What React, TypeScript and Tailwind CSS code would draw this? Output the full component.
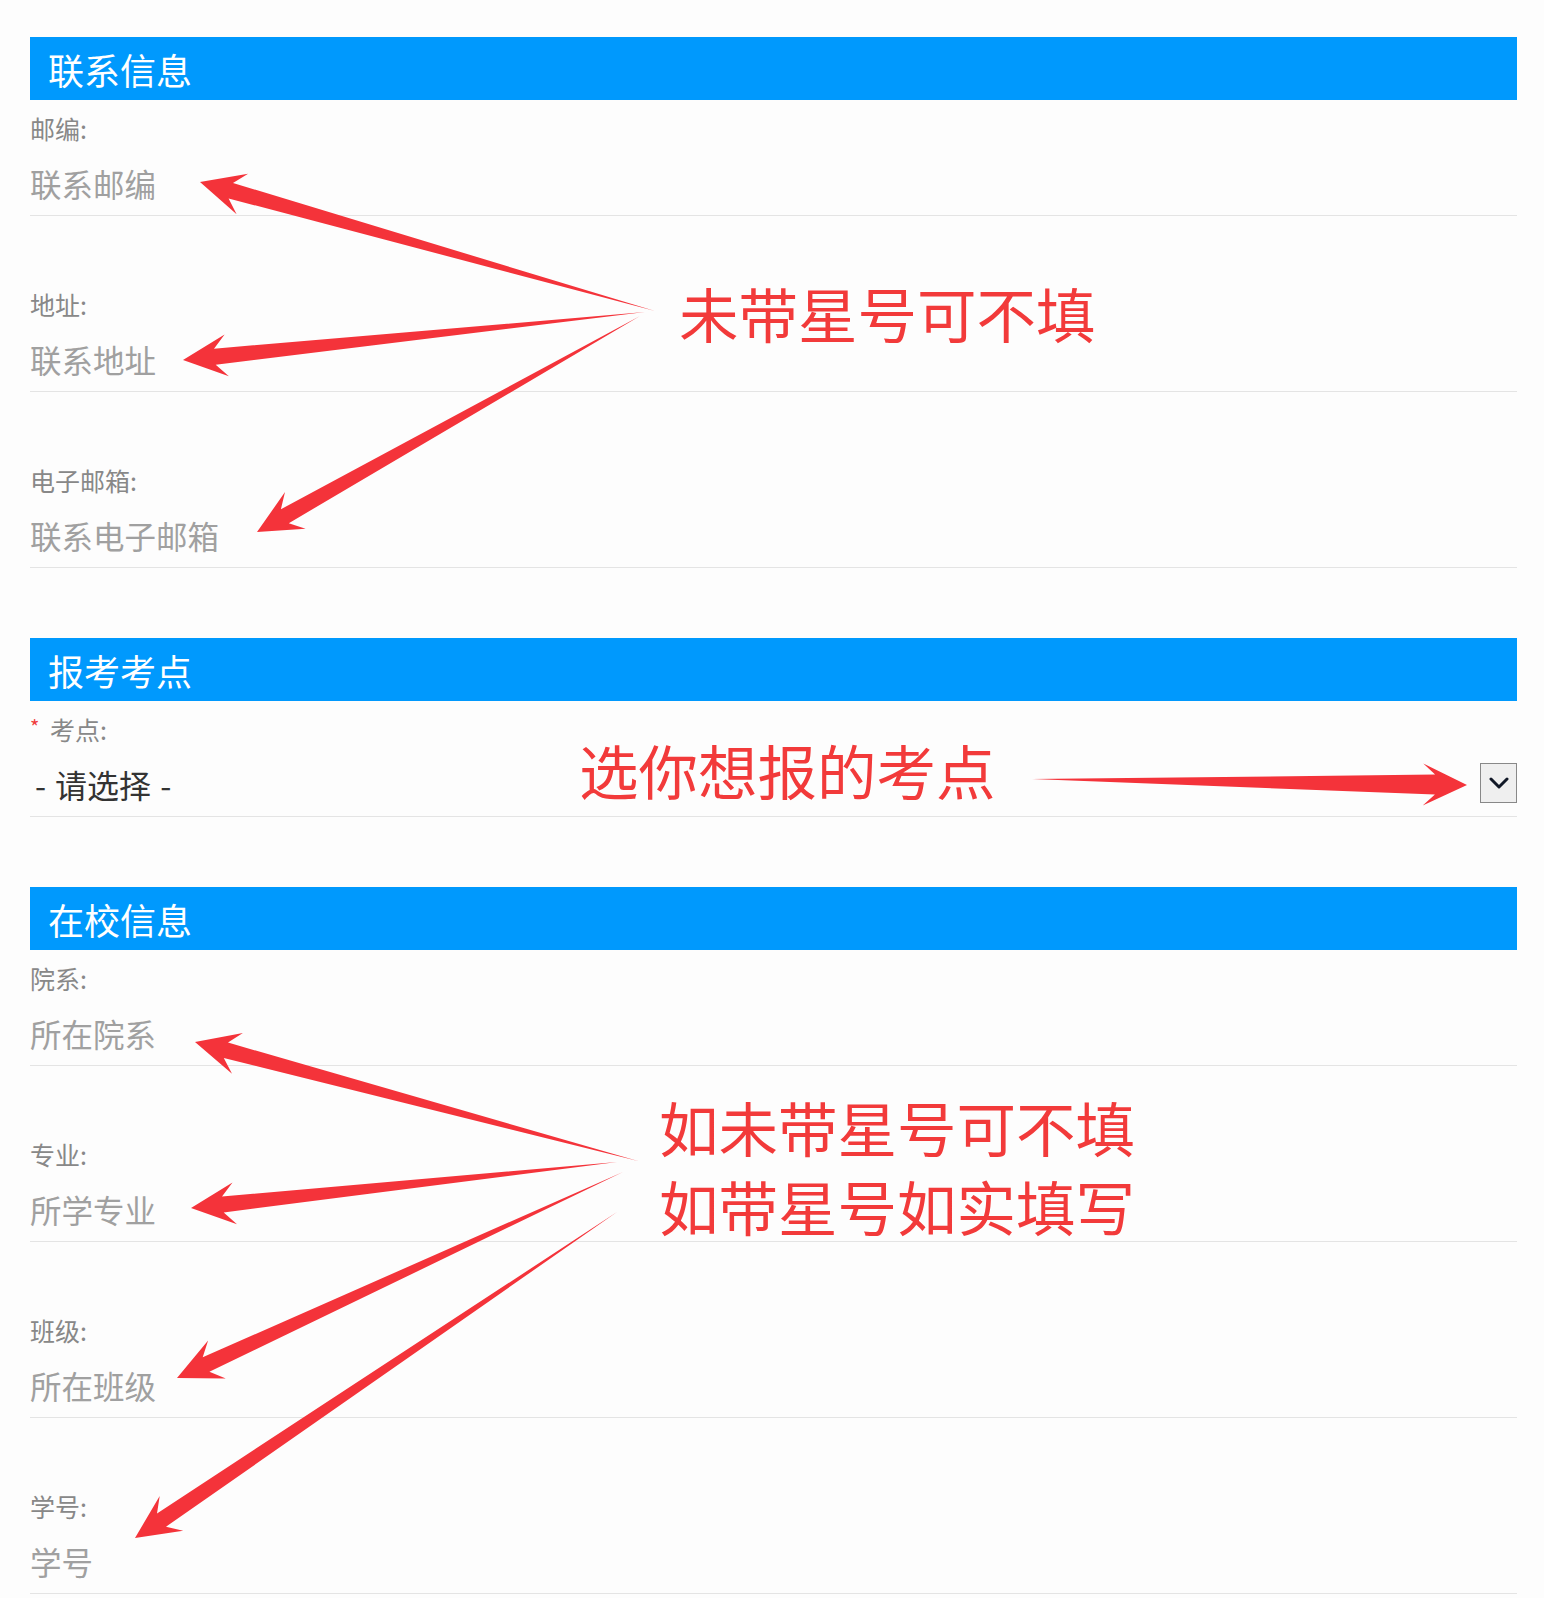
import React from 'react';

type Pt = [number, number];

interface Arrow {
  from: Pt;
  to: Pt;
  shaft?: number;
}

// annotation arrows drawn over the form (tail is a thin point, head is a fat triangle)
const arrows: Arrow[] = [
  { from: [655, 311], to: [200, 182] },
  { from: [645, 312], to: [183, 360] },
  { from: [640, 316], to: [257, 532] },
  { from: [1032, 779], to: [1467, 785], shaft: 20 },
  { from: [638, 1161], to: [195, 1042] },
  { from: [617, 1162], to: [191, 1208] },
  { from: [623, 1172], to: [177, 1378] },
  { from: [617, 1212], to: [135, 1538] },
];

const arrowPoints = ({ from, to, shaft = 16 }: Arrow) => {
  const dx = to[0] - from[0];
  const dy = to[1] - from[1];
  const len = Math.hypot(dx, dy);
  const ux = dx / len;
  const uy = dy / len;
  const nx = -uy;
  const ny = ux;
  const headLen = 44;
  const headHalf = 21;
  const neck: Pt = [to[0] - ux * 32, to[1] - uy * 32];
  const base: Pt = [to[0] - ux * headLen, to[1] - uy * headLen];
  const pts: Pt[] = [
    from,
    [neck[0] + nx * shaft / 2, neck[1] + ny * shaft / 2],
    [base[0] + nx * headHalf, base[1] + ny * headHalf],
    to,
    [base[0] - nx * headHalf, base[1] - ny * headHalf],
    [neck[0] - nx * shaft / 2, neck[1] - ny * shaft / 2],
  ];
  return pts.map((p) => `${p[0].toFixed(1)},${p[1].toFixed(1)}`).join(' ');
};

const SectionHeader: React.FC<{ title: string }> = ({ title }) => (
  <div className="h-[63px] bg-[#0099fd] flex items-center pl-[18px]">
    <span className="text-white text-[36px] leading-none">{title}</span>
  </div>
);

interface FieldProps {
  label: string;
  placeholder: string;
  first?: boolean;
}

const Field: React.FC<FieldProps> = ({ label, placeholder, first }) => (
  <div className={`border-b border-[#e4e4e4] pb-[12px] ${first ? 'pt-[13px]' : 'pt-[73px]'}`}>
    <div className="text-[25px] leading-[30px] text-[#888888]">{label}:</div>
    <div className="mt-[20px] text-[31.5px] leading-[40px] text-[#a0a0a0]">{placeholder}</div>
  </div>
);

const SelectField: React.FC = () => (
  <div className="border-b border-[#e4e4e4] pt-[13px] pb-[12px]">
    <div className="flex items-center text-[25px] leading-[30px] text-[#888888]">
      <span className="text-[#f03c3c] text-[20px] leading-none w-[20px] -mt-[4px]">*</span>
      <span>考点:</span>
    </div>
    <div className="mt-[20px] flex items-center justify-between h-[40px]">
      <span className="flex items-center text-[32px] leading-[40px] text-[#333333] pl-[5px]">
        <span>-</span>
        <span className="mx-[9px]">请选择</span>
        <span>-</span>
      </span>
      <div className="w-[37px] h-[40px] -mt-[2px] bg-[#efefef] border-[1.5px] border-[#888888] flex items-center justify-center">
        <svg width="20" height="12" viewBox="0 0 20 12">
          <path d="M2 2 L10 10 L18 2" fill="none" stroke="#111827" strokeWidth="3" strokeLinecap="round" strokeLinejoin="round" />
        </svg>
      </div>
    </div>
  </div>
);

export default function App() {
  return (
    <div
      className="relative w-[1544px] min-h-[1598px] bg-[#fdfdfd] pt-[37px] pb-[4px]"
      style={{ fontFamily: '"Noto Sans CJK SC", "Noto Sans", sans-serif' }}
    >
      <div className="ml-[30px] w-[1487px]">
        {/* 联系信息 */}
        <SectionHeader title="联系信息" />
        <Field first label="邮编" placeholder="联系邮编" />
        <Field label="地址" placeholder="联系地址" />
        <Field label="电子邮箱" placeholder="联系电子邮箱" />

        {/* 报考考点 */}
        <div className="mt-[70px]">
          <SectionHeader title="报考考点" />
          <SelectField />
        </div>

        {/* 在校信息 */}
        <div className="mt-[70px]">
          <SectionHeader title="在校信息" />
          <Field first label="院系" placeholder="所在院系" />
          <Field label="专业" placeholder="所学专业" />
          <Field label="班级" placeholder="所在班级" />
          <Field label="学号" placeholder="学号" />
        </div>
      </div>

      {/* red annotations on top */}
      <svg className="absolute left-0 top-0 pointer-events-none" width="1544" height="1598" viewBox="0 0 1544 1598">
        {arrows.map((a, i) => (
          <polygon key={i} points={arrowPoints(a)} fill="#f4333a" />
        ))}
      </svg>
      <div className="absolute left-[679px] top-[283px] text-[59.5px] leading-none text-[#f23a3a] whitespace-nowrap">
        未带星号可不填
      </div>
      <div className="absolute left-[579px] top-[740px] text-[59.5px] leading-none text-[#f23a3a] whitespace-nowrap">
        选你想报的考点
      </div>
      <div className="absolute left-[659px] top-[1087px] text-[59.5px] leading-[79px] text-[#f23a3a] whitespace-nowrap">
        <div>如未带星号可不填</div>
        <div>如带星号如实填写</div>
      </div>
    </div>
  );
}
